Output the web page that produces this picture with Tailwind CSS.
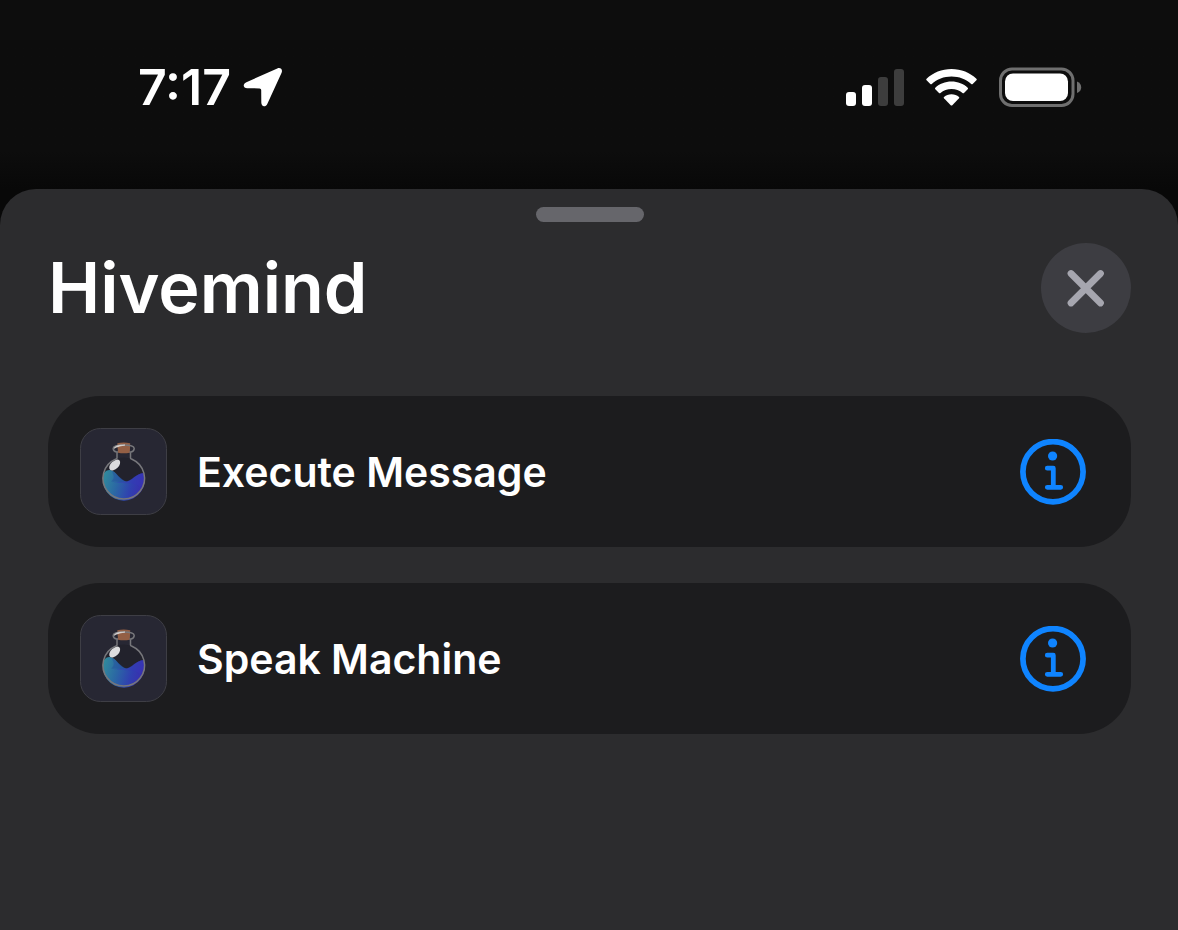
<!DOCTYPE html>
<html lang="en">
<head>
    <meta charset="UTF-8">
    <meta name="viewport" content="width=device-width, initial-scale=1.0">
    <title>Hivemind</title>
    <script src="https://cdn.jsdelivr.net/npm/@tailwindcss/browser@4"></script>
</head>
<body class="flex min-h-screen flex-col bg-[#080808] font-['Inter','Liberation_Sans',sans-serif] font-semibold text-white">

    <!-- Status bar -->
    <header class="flex h-[189px] items-center justify-between bg-linear-to-b from-[#0d0d0d] from-80% to-[#080808] pr-24 pb-4 pl-[138px]">
        <div class="flex items-center gap-3">
            <span class="text-[50px] leading-[60px]">7:17</span>
            <svg class="h-10 w-10" viewBox="0 0 40 40" fill="#fff" aria-hidden="true">
                <path d="M34.3 1.4 3.4 15.2C-.7 17 .1 21.3 4.3 21.3L16.6 21.4Q18.2 21.4 18.2 23L18.3 35.6C18.3 40 22.6 40.6 24.4 36.7L38.6 5.8C40 2.6 37.4 0 34.3 1.4Z"/>
            </svg>
        </div>
        <div class="flex items-center gap-[22px]">
            <!-- Signal -->
            <svg class="h-[38px] w-[58px]" viewBox="0 0 58 38" aria-hidden="true">
                <rect x="0" y="24" width="10" height="14" rx="3" fill="#fff"/>
                <rect x="16" y="17" width="10" height="21" rx="3" fill="#fff"/>
                <rect x="32" y="9" width="10" height="29" rx="3" fill="#3d3d3d"/>
                <rect x="48" y="1" width="10" height="37" rx="3" fill="#3d3d3d"/>
            </svg>
            <!-- Wi-Fi -->
            <svg class="h-[38px] w-[51px]" viewBox="0 0 51 38" fill="#fff" aria-hidden="true">
                <path d="M25.500 1C35.200 1 44 4.700 50.400 10.700Q51.200 11.500 50.400 12.300L46.700 16Q46 16.700 45.200 16C40 11.200 33.100 8.500 25.500 8.500S11 11.200 5.800 16Q5 16.700 4.300 16L.6 12.300Q-.2 11.500.6 10.700C7 4.700 15.800 1 25.500 1Z"/>
                <path d="M25.500 13.600C31.800 13.600 37.500 15.900 41.700 19.700Q42.500 20.500 41.700 21.300L38 25Q37.300 25.700 36.500 25C33.600 22.500 29.700 21 25.500 21S17.400 22.500 14.500 25Q13.700 25.700 13 25L9.300 21.300Q8.500 20.500 9.300 19.700C13.500 15.900 19.200 13.600 25.500 13.600Z"/>
                <path d="M25.500 26.300C28.400 26.300 31 27.200 33 28.900Q33.700 29.500 33 30.300L26.300 37.200Q25.500 38 24.700 37.200L18 30.300Q17.300 29.500 18 28.900C20 27.200 22.600 26.300 25.500 26.300Z"/>
            </svg>
            <!-- Battery -->
            <svg class="h-10 w-[83px]" viewBox="0 0 83 40" aria-hidden="true">
                <rect x="1.500" y="2" width="72.500" height="36.500" rx="11.500" fill="none" stroke="#6f6f6f" stroke-width="3"/>
                <rect x="6" y="6.500" width="63" height="27.500" rx="8" fill="#fff"/>
                <path d="M78 14.500C81 15.700 82.200 17.800 82.200 20.300S81 24.900 78 26.100Z" fill="#6f6f6f"/>
            </svg>
        </div>
    </header>

    <!-- Sheet -->
    <main class="flex-1 rounded-t-[36px] bg-[#2c2c2e] pt-[18px] pr-[47px] pl-12">
        <div class="mx-auto h-[15px] w-[108px] rounded-full bg-[#66666b]"></div>

        <div class="mt-[21px] flex items-center justify-between">
            <h1 class="text-[70px] leading-[90px]">Hivemind</h1>
            <button type="button" aria-label="Close" class="flex size-[90px] items-center justify-center rounded-full bg-[#3d3d42]">
                <svg class="size-10" viewBox="0 0 40 40" fill="none" stroke="#a6a6af" stroke-width="6.800" stroke-linecap="round" aria-hidden="true">
                    <path d="M5 5.500 34.500 35M34.500 5.500 5 35"/>
                </svg>
            </button>
        </div>

        <!-- Shared drawings for the rows -->
        <svg class="absolute size-0" aria-hidden="true">
            <linearGradient id="liquid" x1="0" y1=".3" x2="1" y2=".5">
                <stop offset="0" stop-color="#318a9c"/>
                <stop offset=".35" stop-color="#2b68a4"/>
                <stop offset=".7" stop-color="#3040b0"/>
                <stop offset="1" stop-color="#3a2cae"/>
            </linearGradient>
            <symbol id="potion" viewBox="0 0 87 87">
                <rect x=".5" y=".5" width="86" height="86" rx="20" fill="#272733" stroke="#3e3e45"/>
                <circle cx="43.700" cy="50" r="20.500" fill="#22222c"/>
                <path d="M23.700 45.500C27 40.500 32 41 36 45.500C39.500 49.500 43 53.500 47 53.500C53 52 55.500 46 63.700 45A21 21 0 1 1 23.700 45.500Z" fill="url(#liquid)"/>
                <path d="M32 53.500C38 55 41 53.500 46 53.500C52 52 55.500 46 63.700 45C65 51 63 56 60 59C54 53 42 57 32 53.500Z" fill="#3836b8" opacity=".4"/>
                <path d="M31.500 43C36 44.500 40 50 45.500 53.500C40 54.500 35 53.500 31 53.500C35 51 34 47 31.500 43Z" fill="#23489a" opacity=".4"/>
                <ellipse cx="34.700" cy="37" rx="6.600" ry="4" transform="rotate(-45 34.700 37)" fill="#dcdcde"/>
                <path d="M37.300 15.300Q43.500 13.800 50.200 15.300L49.800 24.700Q43.500 25.800 38 24.700Z" fill="#935f45"/>
                <path d="M37 24.300V30Q37 30.800 35.500 31.200A20.800 20.800 0 1 0 52 31.200Q50.500 30.800 50.500 30V24.300" fill="none" stroke="#77777b" stroke-width="1.500"/>
                <path d="M38 24H36.500Q33.200 23.200 33.200 20.400Q33.500 17 43.700 17T54.200 20.400Q54.200 23.200 51 24H49.500" fill="none" stroke="#77777b" stroke-width="1.500"/>
                <path d="M34 20.300C36 17.300 40 16.800 45 17C41 17.800 38 18.300 34 20.300Z" fill="#e2dfdc" stroke="#e2dfdc" stroke-width=".6"/>
            </symbol>
            <symbol id="info" viewBox="0 0 66 66">
                <circle cx="33" cy="32.700" r="30.100" fill="none" stroke="#0f84ff" stroke-width="5.700"/>
                <circle cx="32.600" cy="17" r="4.600" fill="#0f84ff"/>
                <path d="M27.300 29.200H33.300V48.300M27.300 48.300H40.700" fill="none" stroke="#0f84ff" stroke-width="4.800" stroke-linecap="round" stroke-linejoin="round"/>
            </symbol>
        </svg>

        <!-- Shortcuts -->
        <ul class="mt-[63px] flex flex-col gap-9">
            <li class="flex items-center rounded-[52px] bg-[#1c1c1e] py-8 pr-[45px] pl-8">
                <svg class="size-[87px]" aria-hidden="true"><use href="#potion"/></svg>
                <span class="ml-[30px] flex-1 text-[41px] leading-[48px]">Execute Message</span>
                <button type="button" aria-label="About Execute Message">
                    <svg class="size-[66px]" aria-hidden="true"><use href="#info"/></svg>
                </button>
            </li>
            <li class="flex items-center rounded-[52px] bg-[#1c1c1e] py-8 pr-[45px] pl-8">
                <svg class="size-[87px]" aria-hidden="true"><use href="#potion"/></svg>
                <span class="ml-[30px] flex-1 text-[41px] leading-[48px]">Speak Machine</span>
                <button type="button" aria-label="About Speak Machine">
                    <svg class="size-[66px]" aria-hidden="true"><use href="#info"/></svg>
                </button>
            </li>
        </ul>
    </main>

</body>
</html>
